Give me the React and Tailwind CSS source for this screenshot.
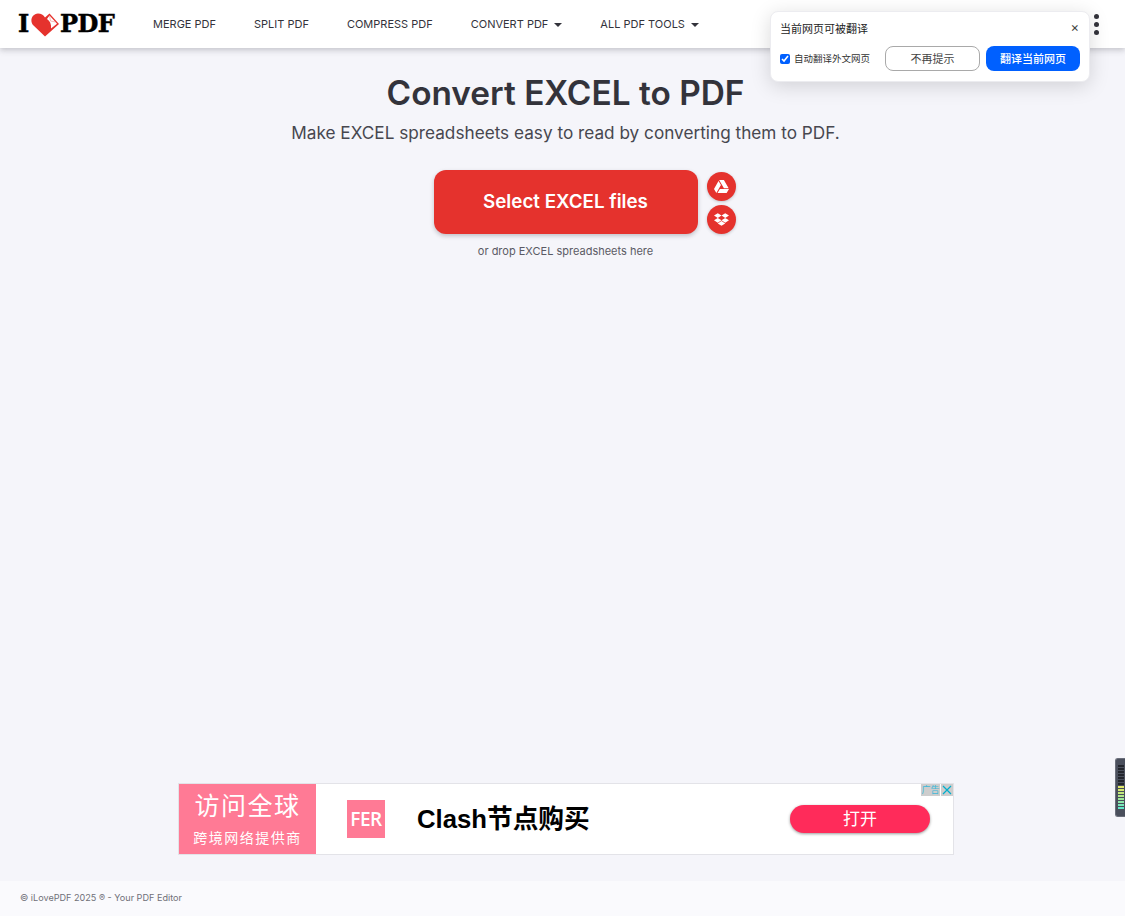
import React from "react";
import { FaGoogleDrive, FaDropbox } from "react-icons/fa";

const sans = "font-['Inter','Noto_Sans_CJK_SC',sans-serif]";
const cjk = "font-['Noto_Sans_CJK_SC','Inter',sans-serif]";

function Caret() {
  return <span className="ml-[6px] w-0 h-0 border-x-[4px] border-x-transparent border-t-[4px] border-t-[#33333b]" />;
}

function Logo() {
  return (
    <div className="flex items-center h-full w-[97px] font-['DejaVu_Serif','Liberation_Serif',serif] font-bold text-black text-[24px] leading-none tracking-[-0.6px] [-webkit-text-stroke:0.5px_black]">
      <span className="w-[13px]">I</span>
      <svg width="29" height="24" viewBox="0 0 29 24" className="shrink-0 mt-[1px]">
        <path d="M14 23.500 L2 12 C-1.500 7.500 1 1 7 0.500 C10 0.500 12.500 2 14 4.500 L18.500 0.500 L28 11 Z" fill="#e5322d" />
        <path d="M18.500 2.500 L26 10.800 L20 15.500 C20.500 11 19 8 16 6 Z" fill="#ffffff" />
        <path d="M18.500 2.500 L19.500 8 L24.500 9" fill="none" stroke="#f08a86" strokeWidth="0.600" />
      </svg>
      <span>PDF</span>
    </div>
  );
}

const nav = [
  ["MERGE PDF", false],
  ["SPLIT PDF", false],
  ["COMPRESS PDF", false],
  ["CONVERT PDF", true],
  ["ALL PDF TOOLS", true],
];

const bars = [
  "#23262d", "#23262d", "#23262d", "#23262d", "#23262d", "#23262d", "#23262d",
  "#e0e86a", "#d4e870", "#c2e87c", "#b2e88a", "#a0e89a", "#8ce8aa", "#78e8ba", "#62e8c8",
];

export default function App() {
  return (
    <div className={`${sans} relative h-[916px] overflow-hidden flex flex-col bg-[#f5f5fa] text-[#33333b]`}>
      <header className="h-12 shrink-0 bg-white shadow-[0_2px_6px_rgba(72,72,83,0.3)] flex items-center pl-[18px] relative">
        <Logo />
        <nav className="flex items-center gap-[38px] ml-[38px] mt-[1px] text-[11px] font-normal text-[#33333b]">
          {nav.map(([t, c]) => (
            <span key={t} className="flex items-center">
              {t}
              {c && <Caret />}
            </span>
          ))}
        </nav>
        <div className="absolute left-[1094px] top-[14px] flex flex-col gap-[3px]">
          <span className="w-[5px] h-[5px] rounded-full bg-[#33333b]" />
          <span className="w-[5px] h-[5px] rounded-full bg-[#33333b]" />
          <span className="w-[5px] h-[5px] rounded-full bg-[#33333b]" />
        </div>
      </header>

      <main className="flex-1 flex flex-col items-center pl-[6px]">
        <h1 className="mt-[25px] text-[33.400px] leading-[40px] font-semibold text-[#33333b]">Convert EXCEL to PDF</h1>
        <p className="mt-[8px] text-[17.200px] leading-[24px] text-[#47474f]">Make EXCEL spreadsheets easy to read by converting them to PDF.</p>
        <div className="mt-[25px] relative">
          <button className="w-[264px] h-16 rounded-xl bg-[#e5322d] text-white text-[18.800px] font-semibold shadow-[0_2px_4px_rgba(72,72,83,0.3)]">
            Select EXCEL files
          </button>
          <span className="absolute left-[273px] top-[2px] w-[29px] h-[29px] rounded-full bg-[#e5322d] flex items-center justify-center text-white shadow-[0_1px_3px_rgba(72,72,83,0.3)]">
            <FaGoogleDrive size={15} />
          </span>
          <span className="absolute left-[273px] top-[35px] w-[29px] h-[29px] rounded-full bg-[#e5322d] flex items-center justify-center text-white shadow-[0_1px_3px_rgba(72,72,83,0.3)]">
            <FaDropbox size={15} />
          </span>
        </div>
        <p className="mt-[10px] text-[11px] leading-[15px] text-[#5a5a64]">or drop EXCEL spreadsheets here</p>
      </main>

      <div className={`${cjk} shrink-0 self-center mb-[26px] ml-[7px] w-[776px] h-[72px] border border-[#e3e3e8] bg-white flex items-center relative`}>
        <div className="w-[137px] h-full bg-[#ff7a95] flex flex-col items-center justify-center text-white pb-[3px]">
          <span className="text-[25px] leading-[32px] tracking-[1.500px]">访问全球</span>
          <span className="text-[14px] leading-[20px] mt-[7px] tracking-[1.500px]">跨境网络提供商</span>
        </div>
        <div className="ml-[31px] w-[38px] h-[38px] bg-[#ff7a95] flex items-center justify-center text-white text-[19px] font-semibold tracking-[-0.5px] font-['Open_Sans',sans-serif]">
          FER
        </div>
        <span className="ml-[32px] text-[25.700px] font-bold text-black font-['Liberation_Sans','Noto_Sans_CJK_SC',sans-serif]">Clash节点购买</span>
        <span className="ml-auto mr-[23px] w-[140px] h-[28px] rounded-full bg-[#ff2b5a] text-white text-[17px] pb-[2px] flex items-center justify-center shadow-[0_1px_3px_rgba(0,0,0,0.4)]">
          打开
        </span>
        <div className="absolute right-0 top-0 flex gap-[1px]">
          <span className="w-[19px] h-[12px] bg-[#cdcdcd] text-[#3fb8d8] text-[9px] leading-[12px] text-center">广告</span>
          <span className="w-[12px] h-[12px] bg-[#cdcdcd] flex items-center justify-center">
            <svg width="10" height="10" viewBox="0 0 10 10"><path d="M1 1 L9 9 M9 1 L1 9" stroke="#00aecd" strokeWidth="1.200" /></svg>
          </span>
        </div>
      </div>

      <footer className="h-[35px] shrink-0 bg-[#fafafd] flex items-center pl-5 pb-[2px] text-[9.100px] text-[#707078]">
        © iLovePDF 2025 ® - Your PDF Editor
      </footer>

      {/* translate popup */}
      <div className={`${cjk} absolute left-[770px] top-[11px] w-[320px] h-[71px] bg-white rounded-[8px] border border-[#ececf0] shadow-[0_4px_20px_rgba(0,0,0,0.15)] pl-[9px] pr-[9px] text-[#222]`}>
        <div className="flex items-center justify-between h-[32px]">
          <span className="text-[11px]">当前网页可被翻译</span>
          <span className="text-[13px] mr-[1px] text-[#444] font-['Inter',sans-serif]">×</span>
        </div>
        <div className="flex items-center mt-[2px]">
          <input type="checkbox" checked readOnly className="w-[10px] h-[10px] m-0 accent-[#0060ff]" />
          <span className="ml-[4px] text-[9.500px] w-[91px] whitespace-nowrap text-[#333]">自动翻译外文网页</span>
          <span className="w-[95px] h-[25px] rounded-[8px] border border-[#a9a9a9] text-[11px] flex items-center justify-center text-[#444]">不再提示</span>
          <span className="ml-[6px] w-[94px] h-[25px] rounded-[8px] bg-[#0060ff] text-white text-[11px] flex items-center justify-center font-medium">翻译当前网页</span>
        </div>
      </div>

      {/* side widget */}
      <div className="absolute left-[1115px] top-[758px] w-[10px] h-[59px] rounded-l-[3px] bg-[#4a4f5c] border border-[#6a6e7a] border-r-0 flex flex-col gap-[1px] pt-[6px] pl-[2px]">
        {bars.map((c, i) => (
          <span key={i} className="w-[6px] h-[2px]" style={{ backgroundColor: c }} />
        ))}
      </div>
    </div>
  );
}
